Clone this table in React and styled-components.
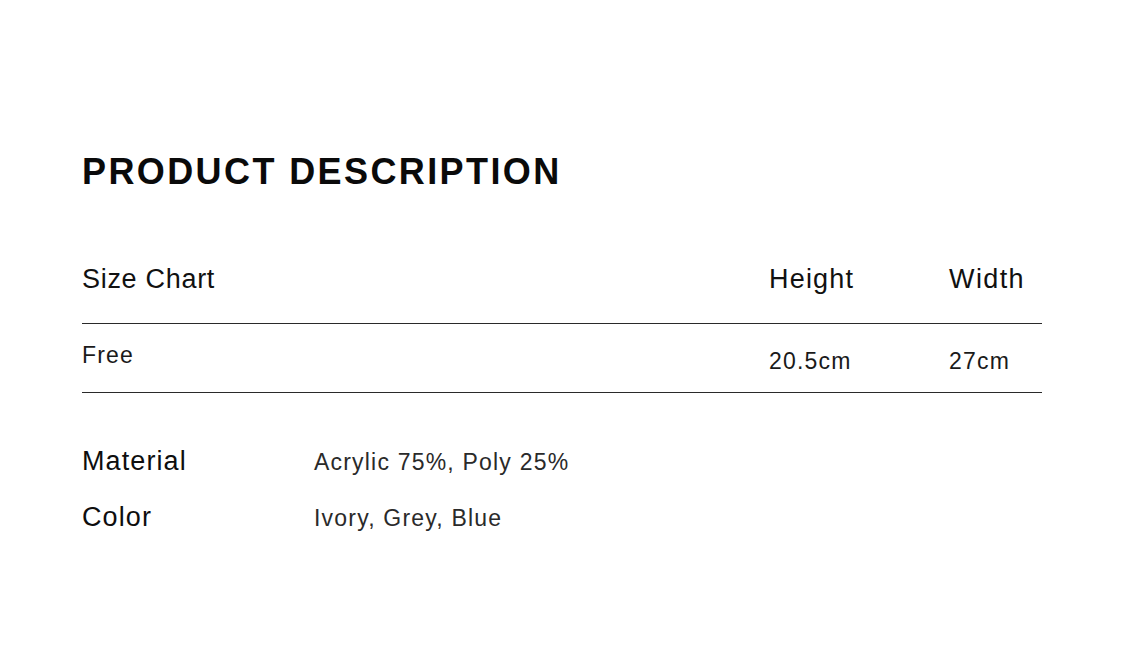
import styled, { createGlobalStyle } from "styled-components";

const GlobalStyle = createGlobalStyle`
  html, body {
    margin: 0;
    padding: 0;
    background: #ffffff;
  }
  body {
    font-family: "Liberation Sans", Arial, sans-serif;
    color: #111111;
  }
`

const Page = styled.div`
  width: 1125px;
  height: 650px;
  box-sizing: border-box;
  padding: 152px 0 0 82px;
  background: #ffffff;
`

const Title = styled.h1`
  margin: 0;
  font-family: "Liberation Sans", Arial, sans-serif;
  font-weight: 700;
  font-size: 36px;
  line-height: 40px;
  letter-spacing: 2.4px;
  color: #0a0a0a;
`

const SizeTable = styled.div`
  margin-top: 72px;
  width: 960px;
  display: grid;
  grid-template-columns: 687px 180px 1fr;
`

const HeadCell = styled.div`
  font-size: 27px;
  line-height: 30px;
  letter-spacing: ${(p) => p.$ls || 1}px;
  color: #111111;
  padding-bottom: 29px;
  border-bottom: 1.5px solid #2a2a2a;
`

const BodyCell = styled.div`
  font-size: 23px;
  line-height: 26px;
  letter-spacing: 1.2px;
  color: #1a1a1a;
  padding-top: ${(p) => p.$top}px;
  padding-bottom: ${(p) => 42 - p.$top}px;
  border-bottom: 1.5px solid #2a2a2a;
`

const Specs = styled.div`
  margin-top: 54px;
  display: grid;
  grid-template-columns: 232px 1fr;
  row-gap: 27px;
  align-items: baseline;
`

const SpecLabel = styled.div`
  font-size: 27px;
  line-height: 28px;
  letter-spacing: 1.1px;
  color: #0e0e0e;
`

const SpecValue = styled.div`
  font-size: 23px;
  line-height: 28px;
  letter-spacing: 1.2px;
  color: #2a2a2a;
`

const specs = [
  ["Material", "Acrylic 75%, Poly 25%"],
  ["Color", "Ivory, Grey, Blue"],
]

export default function App() {
  return (
    <>
      <GlobalStyle />
      <Page>
        <Title>PRODUCT DESCRIPTION</Title>
        <SizeTable>
          <HeadCell $ls={0.7}>Size Chart</HeadCell>
          <HeadCell $ls={1.2}>Height</HeadCell>
          <HeadCell $ls={1.4}>Width</HeadCell>
          <BodyCell $top={18}>Free</BodyCell>
          <BodyCell $top={24}>20.5cm</BodyCell>
          <BodyCell $top={24}>27cm</BodyCell>
        </SizeTable>
        <Specs>
          {specs.map(([label, value]) => [
            <SpecLabel key={label}>{label}</SpecLabel>,
            <SpecValue key={label + "-v"}>{value}</SpecValue>,
          ])}
        </Specs>
      </Page>
    </>
  )
}
